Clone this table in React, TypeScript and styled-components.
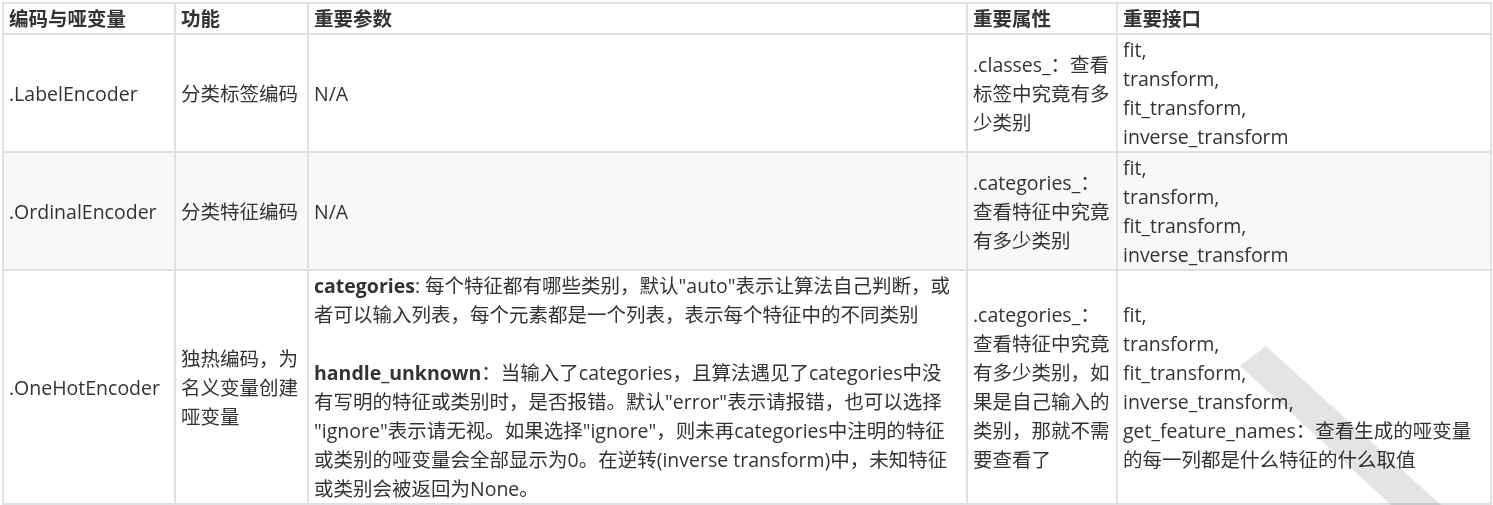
import React from "react";
import styled, { createGlobalStyle } from "styled-components";

const GlobalStyle = createGlobalStyle`
  html, body { margin: 0; padding: 0; background: #ffffff; }
`;

const Page = styled.div`
  position: relative;
  width: 1493px;
  height: 505px;
  overflow: hidden;
  padding: 2px 0 0 2px;
  box-sizing: border-box;
  background: #ffffff;
`;

const Table = styled.table`
  border-collapse: collapse;
  table-layout: fixed;
  width: 1488px;
  font-family: "Open Sans", "Noto Sans CJK SC", sans-serif;
  font-size: 19.5px;
  line-height: 29px;
  color: #333333;
`;

const Row = styled.tr<{ $alt?: boolean }>`
  background: ${(p) => (p.$alt ? "#f8f8f8" : "#ffffff")};
`;

const HeadCell = styled.th`
  border: 2px solid #dfe2e5;
  padding: 0 5px;
  text-align: left;
  font-weight: 700;
  vertical-align: middle;
  color: #333333;
`;

const Cell = styled.td`
  border: 2px solid #dfe2e5;
  padding: 0 5px;
  text-align: left;
  vertical-align: middle;
`;

const Key = styled.b`
  font-weight: 700;
`;

const Watermark = styled.svg`
  position: absolute;
  left: 0;
  top: 0;
  pointer-events: none;
  mix-blend-mode: multiply;
`;

const headers = ["编码与哑变量", "功能", "重要参数", "重要属性", "重要接口"];
const widths = [172, 133, 659, 150, 374];

export default function App() {
  return (
    <>
      <GlobalStyle />
      <Page>
        <Table>
          <colgroup>
            {widths.map((w, i) => (
              <col key={i} style={{ width: w }} />
            ))}
          </colgroup>
          <thead>
            <Row>
              {headers.map((h) => (
                <HeadCell key={h}>{h}</HeadCell>
              ))}
            </Row>
          </thead>
          <tbody>
            <Row>
              <Cell>.LabelEncoder</Cell>
              <Cell>分类标签编码</Cell>
              <Cell>N/A</Cell>
              <Cell>
                .classes_：查看
                <br />
                标签中究竟有多
                <br />
                少类别
              </Cell>
              <Cell>
                fit,
                <br />
                transform,
                <br />
                fit_transform,
                <br />
                inverse_transform
              </Cell>
            </Row>
            <Row $alt>
              <Cell>.OrdinalEncoder</Cell>
              <Cell>分类特征编码</Cell>
              <Cell>N/A</Cell>
              <Cell>
                .categories_：
                <br />
                查看特征中究竟
                <br />
                有多少类别
              </Cell>
              <Cell>
                fit,
                <br />
                transform,
                <br />
                fit_transform,
                <br />
                inverse_transform
              </Cell>
            </Row>
            <Row>
              <Cell>.OneHotEncoder</Cell>
              <Cell>
                独热编码，为
                <br />
                名义变量创建
                <br />
                哑变量
              </Cell>
              <Cell>
                <Key>categories</Key>: 每个特征都有哪些类别，默认"auto"表示让算法自己判断，或
                <br />
                者可以输入列表，每个元素都是一个列表，表示每个特征中的不同类别
                <br />
                <br />
                <Key>handle_unknown</Key>：当输入了categories，且算法遇见了categories中没
                <br />
                有写明的特征或类别时，是否报错。默认"error"表示请报错，也可以选择
                <br />
                "ignore"表示请无视。如果选择"ignore"，则未再categories中注明的特征
                <br />
                或类别的哑变量会全部显示为0。在逆转(inverse transform)中，未知特征
                <br />
                或类别会被返回为None。
              </Cell>
              <Cell>
                .categories_：
                <br />
                查看特征中究竟
                <br />
                有多少类别，如
                <br />
                果是自己输入的
                <br />
                类别，那就不需
                <br />
                要查看了
              </Cell>
              <Cell>
                fit,
                <br />
                transform,
                <br />
                fit_transform,
                <br />
                inverse_transform,
                <br />
                get_feature_names：查看生成的哑变量
                <br />
                的每一列都是什么特征的什么取值
              </Cell>
            </Row>
          </tbody>
        </Table>
        <Watermark width="1493" height="505" viewBox="0 0 1493 505">
          <polygon points="1240,366 1266,346 1464,526 1414,526" fill="#e4e4e4" />
        </Watermark>
      </Page>
    </>
  );
}
